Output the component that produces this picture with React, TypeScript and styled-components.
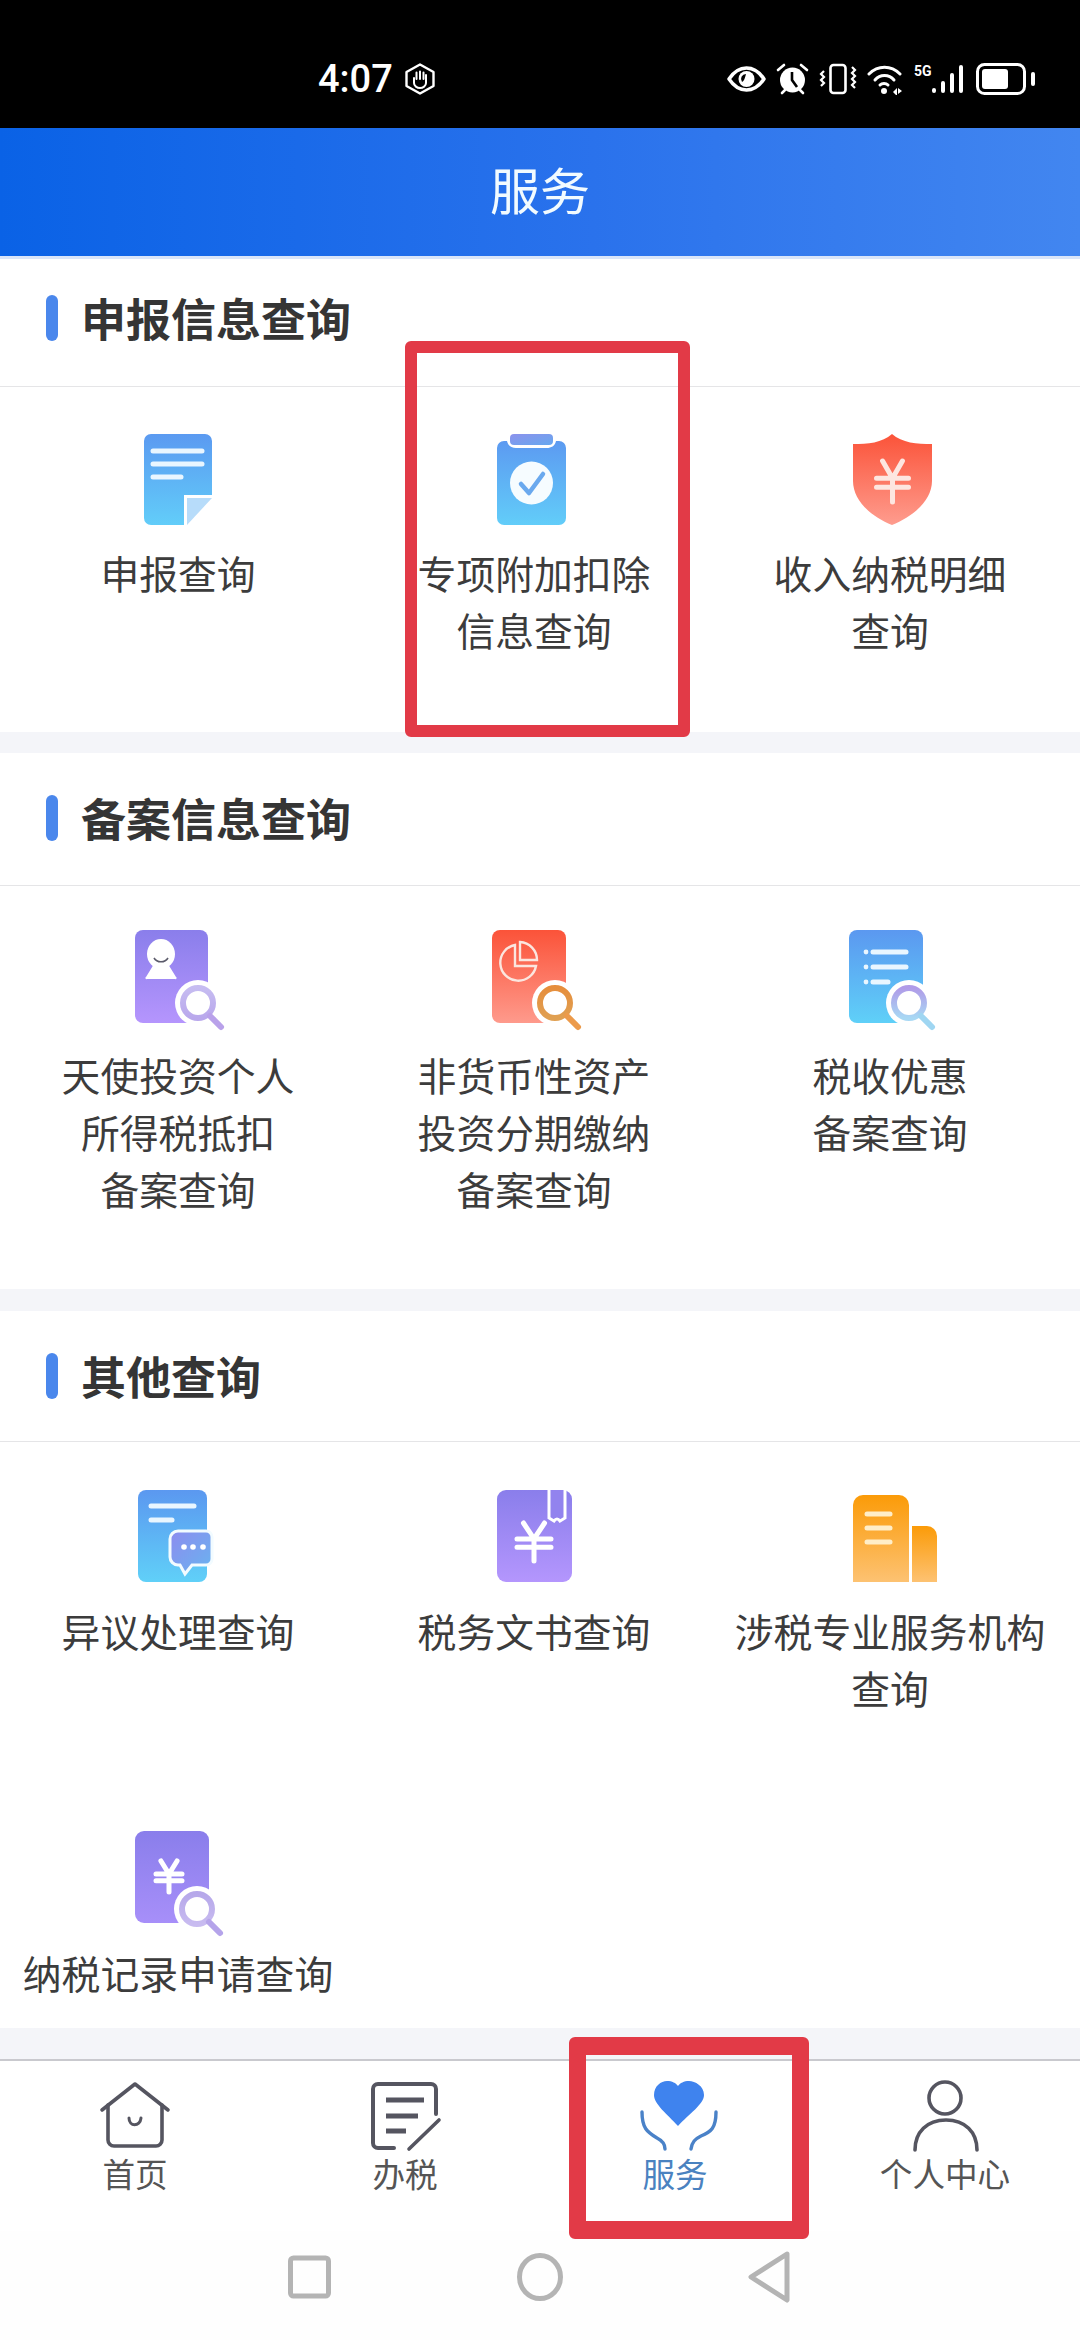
import React from 'react';
import styled, { createGlobalStyle } from 'styled-components';

const GlobalStyle = createGlobalStyle`
  html, body {
    margin: 0;
    padding: 0;
    background: #fff;
  }
  * {
    box-sizing: border-box;
  }
`;

const Page = styled.div`
  position: relative;
  width: 1080px;
  height: 2340px;
  overflow: hidden;
  display: flex;
  flex-direction: column;
  background: #f4f5f9;
  font-family: "Noto Sans CJK SC", "Noto Sans", sans-serif;
`;

const StatusBar = styled.div`
  height: 128px;
  flex: none;
  background: #000;
  color: #fff;
  display: flex;
  align-items: center;
  padding: 30px 44px 0 318px;
`;

const Clock = styled.span`
  font-family: Roboto, "Liberation Sans", sans-serif;
  font-size: 38px;
  font-weight: 500;
  line-height: 1;
  margin-right: 11px;
`;

const StatusIcons = styled.div`
  margin-left: auto;
  display: flex;
  align-items: center;
  gap: 10px;
`;

const Cellular = styled.div`
  position: relative;
  display: flex;
  align-items: center;
  padding-left: 17px;
`;

const FiveG = styled.span`
  position: absolute;
  left: 0;
  top: 0;
  font-family: Roboto, "Liberation Sans", sans-serif;
  font-size: 14px;
  font-weight: 700;
  line-height: 1;
`;

const Header = styled.header`
  height: 131px;
  flex: none;
  display: flex;
  align-items: center;
  justify-content: center;
  padding: 0 0 8px 0;
  background: linear-gradient(90deg, #0a62e6 0%, #2a72ec 55%, #4286f0 100%);
  border-bottom: 3px solid #d9e5f9;
`;

const HeaderTitle = styled.h1`
  margin: 0;
  color: #f2fbff;
  font-size: 50px;
  font-weight: 400;
  line-height: 1;
`;

const Section = styled.section<{ $gap: number }>`
  flex: none;
  background: #fff;
  margin-bottom: ${p => p.$gap}px;
`;

const SectionHead = styled.div<{ $height: number; $lift: number }>`
  height: ${p => p.$height}px;
  display: flex;
  align-items: center;
  gap: 23px;
  padding: 0 0 ${p => p.$lift}px 46px;
  border-bottom: 1px solid #e5e5e7;
`;

const Marker = styled.span`
  width: 12px;
  height: 46px;
  border-radius: 6px;
  background: #4a87ec;
`;

const SectionTitle = styled.h2`
  margin: 0;
  color: #353535;
  font-size: 45px;
  font-weight: 700;
  line-height: 1;
`;

const Grid = styled.div<{ $bottom: number; $rowGap?: number }>`
  display: grid;
  grid-template-columns: repeat(3, 356px);
  row-gap: ${p => p.$rowGap ?? 0}px;
  padding-bottom: ${p => p.$bottom}px;
`;

const Cell = styled.div`
  display: flex;
  flex-direction: column;
  align-items: center;
  padding-top: 44px;
`;

const Glyph = styled.svg`
  width: 120px;
  height: 100px;
  overflow: visible;
  flex: none;
`;

const Label = styled.div<{ $top: number }>`
  margin-top: ${p => p.$top}px;
  padding-bottom: 3px;
  color: #3c3c3c;
  font-size: 38.8px;
  line-height: 57px;
  text-align: center;
  white-space: nowrap;
`;

const TabBar = styled.nav`
  margin-top: auto;
  height: 172px;
  flex: none;
  display: grid;
  grid-template-columns: repeat(4, 270px);
  background: #fff;
  border-top: 2px solid #c9c9ce;
`;

const Tab = styled.div<{ $active?: boolean }>`
  display: flex;
  flex-direction: column;
  align-items: center;
  padding-top: 21px;
  color: ${p => (p.$active ? '#4a82c0' : '#555')};
`;

const TabGlyph = styled.svg`
  width: 80px;
  height: 70px;
  overflow: visible;
  flex: none;
`;

const TabLabel = styled.span`
  margin-top: -1px;
  font-size: 32.6px;
  line-height: 44px;
`;

const NavBar = styled.div`
  height: 109px;
  flex: none;
  background: #fefefe;
  display: flex;
  align-items: flex-start;
  padding: 0 0 0 288px;
`;

const NavGlyph = styled.svg`
  width: 510px;
  height: 60px;
  margin-top: 22px;
  overflow: visible;
`;

const Callout = styled.div<{ $weightX: number; $weightY: number }>`
  position: absolute;
  border-style: solid;
  border-color: #e23a47;
  border-width: ${p => p.$weightY}px ${p => p.$weightX}px;
  border-radius: 6px;
  pointer-events: none;
`;

const ReportCallout = styled(Callout)`
  left: 405px;
  top: 341px;
  width: 285px;
  height: 396px;
`;

const ServiceCallout = styled(Callout)`
  left: 569px;
  top: 2037px;
  width: 240px;
  height: 202px;
`;

type GradProps = { id: string; from: string; to: string; x2?: number };

const Grad = ({ id, from, to, x2 = 0 }: GradProps) => (
  <linearGradient id={id} x1="0" y1="0" x2={x2} y2="1">
    <stop offset="0" stopColor={from} />
    <stop offset="1" stopColor={to} />
  </linearGradient>
);

const Lines = ({ rows, color = '#e9f6ff', width = 5 }: { rows: number[][]; color?: string; width?: number }) => (
  <g stroke={color} strokeWidth={width} strokeLinecap="round" fill="none">
    {rows.map(([x1, y, x2]) => (
      <path key={`${x1}-${y}`} d={`M${x1} ${y}H${x2}`} />
    ))}
  </g>
);

// yen sign centred on cx, spanning top..bottom
const Yen = ({ cx, top, bottom, half, color = '#fff', width = 5 }: {
  cx: number; top: number; bottom: number; half: number; color?: string; width?: number;
}) => {
  const h = bottom - top;
  const joint = top + h * 0.42;
  const bar2 = top + h * 0.64;
  return (
    <path
      d={`M${cx - half * 0.62} ${top}L${cx} ${joint}L${cx + half * 0.62} ${top}M${cx} ${joint}V${bottom}M${cx - half} ${joint}H${cx + half}M${cx - half} ${bar2}H${cx + half}`}
      stroke={color}
      strokeWidth={width}
      strokeLinecap="round"
      strokeLinejoin="round"
      fill="none"
    />
  );
};

const Lens = ({ id, cx, cy, from, to, handle }: { id: string; cx: number; cy: number; from: string; to: string; handle: string }) => (
  <g fill="none">
    <defs>
      <Grad id={id} from={from} to={to} />
    </defs>
    <circle cx={cx} cy={cy} r={23} fill="#fff" />
    <circle cx={cx} cy={cy} r={15} stroke={`url(#${id})`} strokeWidth={6} />
    <path d={`M${cx + 12} ${cy + 13}L${cx + 23} ${cy + 24}`} stroke={handle} strokeWidth={6} strokeLinecap="round" />
  </g>
);

const ReportIcon = () => (
  <Glyph viewBox="0 0 120 100">
    <defs>
      <Grad id="report" from="#5b9af1" to="#62cdf9" />
    </defs>
    <path d="M33 3H87a7 7 0 0 1 7 7V64H66V94H33a7 7 0 0 1-7-7V10a7 7 0 0 1 7-7Z" fill="url(#report)" />
    <Lines rows={[[35, 20, 84], [35, 33, 84], [35, 46, 63]]} />
    <path d="M69 67H94L69 94Z" fill="#b7dcfa" />
  </Glyph>
);

const DeductionIcon = () => (
  <Glyph viewBox="0 0 120 100">
    <defs>
      <Grad id="deduct" from="#5c9af1" to="#62cdf9" />
      <Grad id="deductClip" from="#8c92ec" to="#66a8ef" x2={1} />
    </defs>
    <path d="M30 10h3c1 5 5 7 9 7h31c4 0 8-2 9-7h3a7 7 0 0 1 7 7V87a7 7 0 0 1-7 7H30a7 7 0 0 1-7-7V17a7 7 0 0 1 7-7Z" fill="url(#deduct)" />
    <rect x="36" y="3" width="43" height="11" rx="4" fill="url(#deductClip)" />
    <circle cx="57.5" cy="52" r="21.5" fill="#f6fcff" />
    <path d="M47 53l8 9 14-19" stroke="#6aa9ee" strokeWidth="4.5" strokeLinecap="round" strokeLinejoin="round" fill="none" />
  </Glyph>
);

const ShieldIcon = () => (
  <Glyph viewBox="0 0 120 100">
    <defs>
      <Grad id="shield" from="#fb5339" to="#fe9c8e" />
    </defs>
    <path d="M23 13C38 13 52 12 62 3C72 12 87 13 102 13V50C102 70 82 86 62 94C42 86 23 70 23 50Z" fill="url(#shield)" />
    <Yen cx={62.5} top={30} bottom={71} half={16} color="#fde6e0" />
  </Glyph>
);

const AngelIcon = () => (
  <Glyph viewBox="0 0 120 100">
    <defs>
      <Grad id="angel" from="#8a7eeb" to="#b595fd" />
    </defs>
    <rect x="17" y="0" width="73" height="93" rx="8" fill="url(#angel)" />
    <ellipse cx="43" cy="24" rx="14" ry="15" fill="#fff" />
    <path d="M36 34h14l8 13a1 1 0 0 1-1 2H29a1 1 0 0 1-1-2Z" fill="#fff" />
    <path d="M36 28c3 5 11 5 14 0" stroke="#5a5a6a" strokeWidth="1.6" fill="none" />
    <Lens id="angelLens" cx={80} cy={73} from="#c6bcf1" to="#b9a8ec" handle="#b9a1ea" />
  </Glyph>
);

const AssetIcon = () => (
  <Glyph viewBox="0 0 120 100">
    <defs>
      <Grad id="asset" from="#fb5339" to="#fe9a8c" />
    </defs>
    <rect x="18" y="0" width="74" height="93" rx="8" fill="url(#asset)" />
    <g stroke="#fbe6df" strokeWidth="2.4" fill="none">
      <path d="M41 15A18 18 0 1 0 62 36H41Z" />
      <path d="M46 12A18 18 0 0 1 63 30H46Z" />
    </g>
    <Lens id="assetLens" cx={81} cy={73} from="#e68e3c" to="#e0a052" handle="#ec9a4a" />
  </Glyph>
);

const PreferenceIcon = () => (
  <Glyph viewBox="0 0 120 100">
    <defs>
      <Grad id="prefer" from="#5b98f0" to="#5fd0f8" />
    </defs>
    <rect x="19" y="0" width="74" height="93" rx="8" fill="url(#prefer)" />
    <Lines rows={[[43, 22, 76], [43, 37, 76], [43, 52, 58]]} />
    <g fill="#e9f6ff">
      <circle cx="36" cy="22" r="2.4" />
      <circle cx="36" cy="37" r="2.4" />
      <circle cx="36" cy="52" r="2.4" />
    </g>
    <Lens id="preferLens" cx={79} cy={73} from="#b09be8" to="#a8d8f4" handle="#9fd6f2" />
  </Glyph>
);

const ObjectionIcon = () => (
  <Glyph viewBox="0 0 120 100">
    <defs>
      <Grad id="object" from="#5b98f0" to="#60d0f8" />
      <Grad id="objectBubble" from="#8d8cef" to="#68b4ef" x2={1} />
    </defs>
    <rect x="20" y="4" width="69" height="92" rx="8" fill="url(#object)" />
    <Lines rows={[[33, 20, 76], [33, 34, 54]]} />
    <path
      d="M60 45H88a6 6 0 0 1 6 6V73a6 6 0 0 1-6 6H74L67 88L62 79H60a8 8 0 0 1-8-8V53a8 8 0 0 1 8-8Z"
      fill="url(#objectBubble)"
      stroke="#f2fbff"
      strokeWidth="3"
    />
    <g fill="#fff">
      <circle cx="66" cy="61" r="2.8" />
      <circle cx="75" cy="61" r="2.8" />
      <circle cx="85" cy="61" r="2.8" />
    </g>
  </Glyph>
);

const DocumentIcon = () => (
  <Glyph viewBox="0 0 120 100">
    <defs>
      <Grad id="book" from="#8a7eeb" to="#b496fd" />
    </defs>
    <rect x="23" y="4" width="75" height="92" rx="9" fill="url(#book)" />
    {/* ribbon, open at the top edge */}
    <path d="M75 4V32L80 35Q83 31 86 35L91 32V4" fill="#9283ee" stroke="#fff" strokeWidth="3" />
    <Yen cx={60} top={37} bottom={75} half={17} />
  </Glyph>
);

const AgencyIcon = () => (
  <Glyph viewBox="0 0 120 100">
    <defs>
      <Grad id="agency" from="#fb9b08" to="#fdc272" />
    </defs>
    <path d="M33 9H69a10 10 0 0 1 10 10V96H23V19a10 10 0 0 1 10-10Z" fill="url(#agency)" />
    <path d="M82 40H97a10 10 0 0 1 10 10V96H82Z" fill="url(#agency)" />
    <Lines rows={[[37, 28, 60], [37, 42, 60], [37, 56, 60]]} color="#ffeec8" />
  </Glyph>
);

const RecordIcon = () => (
  <Glyph viewBox="0 0 120 100">
    <defs>
      <Grad id="record" from="#8a7eeb" to="#a78ff9" />
    </defs>
    <rect x="17" y="0" width="74" height="92" rx="9" fill="url(#record)" />
    <Yen cx={51} top={30} bottom={61} half={13} />
    <Lens id="recordLens" cx={79} cy={78} from="#b6a8ea" to="#c8bbf0" handle="#b5a4ea" />
  </Glyph>
);

type Item = { key: string; icon: React.ReactNode; lines: string[]; labelTop?: number };

const declare: Item[] = [
  { key: 'report', icon: <ReportIcon />, lines: ['申报查询'], labelTop: 13 },
  { key: 'deduct', icon: <DeductionIcon />, lines: ['专项附加扣除', '信息查询'], labelTop: 13 },
  { key: 'income', icon: <ShieldIcon />, lines: ['收入纳税明细', '查询'], labelTop: 13 },
];

const filing: Item[] = [
  { key: 'angel', icon: <AngelIcon />, lines: ['天使投资个人', '所得税抵扣', '备案查询'] },
  { key: 'asset', icon: <AssetIcon />, lines: ['非货币性资产', '投资分期缴纳', '备案查询'] },
  { key: 'prefer', icon: <PreferenceIcon />, lines: ['税收优惠', '备案查询'] },
];

const other: Item[] = [
  { key: 'object', icon: <ObjectionIcon />, lines: ['异议处理查询'] },
  { key: 'doc', icon: <DocumentIcon />, lines: ['税务文书查询'] },
  { key: 'agency', icon: <AgencyIcon />, lines: ['涉税专业服务机构', '查询'] },
  { key: 'record', icon: <RecordIcon />, lines: ['纳税记录申请查询'], labelTop: 13 },
];

const QueryGrid = ({ items, bottom, rowGap }: { items: Item[]; bottom: number; rowGap?: number }) => (
  <Grid $bottom={bottom} $rowGap={rowGap}>
    {items.map(item => (
      <Cell key={item.key}>
        {item.icon}
        <Label $top={item.labelTop ?? 16}>
          {item.lines.map(line => (
            <div key={line}>{line}</div>
          ))}
        </Label>
      </Cell>
    ))}
  </Grid>
);

const Head = ({ title, height, lift }: { title: string; height: number; lift: number }) => (
  <SectionHead $height={height} $lift={lift}>
    <Marker />
    <SectionTitle>{title}</SectionTitle>
  </SectionHead>
);

const StatusIconSet = () => (
  <StatusIcons>
    {/* eye comfort */}
    <svg width="39" height="26" viewBox="0 0 39 26">
      <path d="M2 13C8 4 14 2 19.5 2S31 4 37 13C31 22 25 24 19.5 24S8 22 2 13Z" fill="none" stroke="#fff" strokeWidth="3.5" strokeLinejoin="round" />
      <circle cx="19.5" cy="13" r="8" fill="#fff" />
      <path d="M19 8a5 5 0 0 0-4 8c2-1 3-4 4-8Z" fill="#000" />
    </svg>
    {/* alarm */}
    <svg width="33" height="32" viewBox="0 0 33 32">
      <circle cx="16.5" cy="17" r="12.5" fill="#fff" />
      <path d="M16 9v8l5 7" stroke="#000" strokeWidth="2.6" fill="none" />
      <path d="M2 7l6-5M31 7l-6-5M6 30l3-3M27 30l-3-3" stroke="#fff" strokeWidth="2.6" strokeLinecap="round" />
    </svg>
    {/* vibrate */}
    <svg width="38" height="32" viewBox="0 0 38 32">
      <rect x="11.5" y="2" width="15" height="28" rx="3" fill="none" stroke="#fff" strokeWidth="2.6" />
      <path d="M5 8l-3 3 3 3-3 3 3 3 -3 3M33 4l3 3-3 3 3 3-3 3 3 3-3 3 3 3" fill="none" stroke="#fff" strokeWidth="2.2" />
    </svg>
    {/* wifi */}
    <svg width="37" height="32" viewBox="0 0 37 32">
      <g fill="none" stroke="#fff" strokeWidth="3" strokeLinecap="round">
        <path d="M2 11C11 2 24 2 33 11" />
        <path d="M8 17C13 11 22 11 27 17" />
        <path d="M13 22C15 20 19 20 21 22" />
      </g>
      <circle cx="17" cy="28" r="3" fill="#fff" />
      <path d="M26 29l4-4v8ZM31 25l4 3-4 3Z" fill="#fff" />
    </svg>
    <Cellular>
      <FiveG>5G</FiveG>
      <svg width="33" height="30" viewBox="0 0 33 30">
        <g stroke="#fff" strokeWidth="4" strokeLinecap="round">
          <path d="M3 26v1M12 19v8M21 11v16M30 3v24" />
        </g>
      </svg>
    </Cellular>
    {/* battery */}
    <svg width="60" height="32" viewBox="0 0 60 32" style={{ marginLeft: 2 }}>
      <rect x="1.5" y="1.5" width="47" height="29" rx="7" fill="none" stroke="#fff" strokeWidth="3" />
      <rect x="6" y="6" width="26" height="20" rx="3" fill="#fff" />
      <rect x="55" y="9" width="4" height="14" rx="2" fill="#fff" />
    </svg>
  </StatusIcons>
);

export default function App() {
  return (
    <Page>
      <GlobalStyle />
      <StatusBar>
        <Clock>4:07</Clock>
        <svg width="32" height="32" viewBox="0 0 31 32">
          <path d="M15.5 1.5L29 9V23L15.5 30.5L2 23V9Z" fill="none" stroke="#fff" strokeWidth="2.4" strokeLinejoin="round" />
          <path d="M9.5 15v5c0 3 3 5 6 5s6-2 6-5V12M12 16V9.5M15.5 16V8.5M19 16V9.5" stroke="#fff" strokeWidth="2" strokeLinecap="round" fill="none" />
        </svg>
        <StatusIconSet />
      </StatusBar>
      <Header>
        <HeaderTitle>服务</HeaderTitle>
      </Header>

      <Section $gap={21}>
        <Head title="申报信息查询" height={128} lift={10} />
        <QueryGrid items={declare} bottom={71} />
      </Section>
      <Section $gap={22}>
        <Head title="备案信息查询" height={133} lift={3} />
        <QueryGrid items={filing} bottom={69} />
      </Section>
      <Section $gap={0}>
        <Head title="其他查询" height={131} lift={1} />
        <QueryGrid items={other} bottom={24} rowGap={68} />
      </Section>

      <TabBar>
        <Tab>
          <TabGlyph viewBox="0 0 80 70">
            <g fill="none" stroke="#555560" strokeWidth="3.6" strokeLinecap="round" strokeLinejoin="round">
              <path d="M7 28L40 2L73 28" />
              <path d="M13 23V58a6 6 0 0 0 6 6H61a6 6 0 0 0 6-6V23" />
              <path d="M34 36c0 9 11 9 12 0" strokeWidth="3" />
            </g>
          </TabGlyph>
          <TabLabel>首页</TabLabel>
        </Tab>
        <Tab>
          <TabGlyph viewBox="0 0 80 70">
            <g fill="none" stroke="#555560" strokeWidth="4" strokeLinecap="round" strokeLinejoin="round">
              <path d="M29 66H13a5 5 0 0 1-5-5V7a5 5 0 0 1 5-5H66a5 5 0 0 1 5 5V32" />
              <path d="M74 38L44 67" strokeWidth="3.6" />
              <path d="M21 18H59M21 34H53M21 49H41" strokeWidth="5" strokeLinecap="butt" />
            </g>
          </TabGlyph>
          <TabLabel>办税</TabLabel>
        </Tab>
        <Tab $active>
          <TabGlyph viewBox="0 0 80 70">
            <path d="M43 44C32 32 19 22 19 13C19 4 26-1 32-1C37-1 41 1 43 4C45 1 49-1 54-1C60-1 69 4 69 13C69 22 54 32 43 44Z" fill="#3f83ee" />
            <g fill="none" stroke="#4a82c8" strokeWidth="3.4" strokeLinecap="round">
              <path d="M7 30C7 46 12 50 22 56C28 59 30 62 30 67" />
              <path d="M81 30C81 46 76 50 66 54C60 57 57 60 56 67" />
            </g>
          </TabGlyph>
          <TabLabel>服务</TabLabel>
        </Tab>
        <Tab>
          <TabGlyph viewBox="0 0 80 70">
            <g fill="none" stroke="#555560" strokeWidth="3.6" strokeLinecap="round">
              <circle cx="40" cy="16" r="16" />
              <path d="M10 68C10 50 22 38 41 38C60 38 72 50 72 68" />
            </g>
          </TabGlyph>
          <TabLabel>个人中心</TabLabel>
        </Tab>
      </TabBar>

      <NavBar>
        <NavGlyph viewBox="0 0 510 60">
          <g fill="none" stroke="#b4b4b4" strokeWidth="5" strokeLinejoin="round">
            <rect x="2.5" y="5" width="38" height="38" rx="3" />
            <ellipse cx="252" cy="24" rx="20.5" ry="21.5" />
            <path d="M499 1L463 24L499 47Z" />
          </g>
        </NavGlyph>
      </NavBar>

      <ReportCallout $weightX={12} $weightY={12} />
      <ServiceCallout $weightX={17} $weightY={18} />
    </Page>
  );
}
